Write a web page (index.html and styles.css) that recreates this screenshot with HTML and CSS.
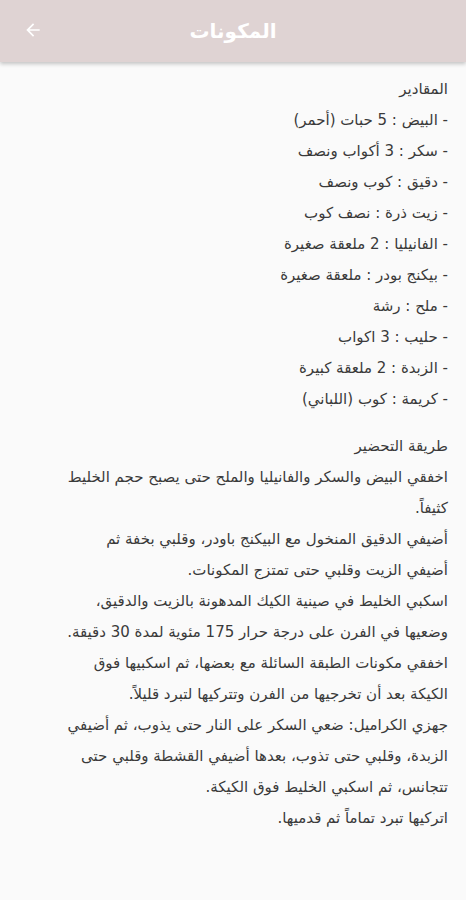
FILE: index.html
```html
<!DOCTYPE html>
<html lang="ar" dir="rtl">
<head>
<meta charset="utf-8">
<title>المكونات</title>
<link rel="stylesheet" href="styles.css">
</head>
<body>
<header class="appbar">
  <h1 class="appbar-title">المكونات</h1>
  <button class="back-btn" aria-label="رجوع">
    <svg width="20" height="20" viewBox="0 0 24 24"><path d="M20 11H7.83l5.59-5.59L12 4l-8 8 8 8 1.41-1.41L7.83 13H20v-2z" fill="#ffffff"/></svg>
  </button>
</header>
<main class="content">
  <section class="block">
    <p class="line">المقادير</p>
    <p class="line">- البيض : 5 حبات (أحمر)</p>
    <p class="line">- سكر : 3 أكواب ونصف</p>
    <p class="line">- دقيق : كوب ونصف</p>
    <p class="line">- زيت ذرة : نصف كوب</p>
    <p class="line">- الفانيليا : 2 ملعقة صغيرة</p>
    <p class="line">- بيكنج بودر : ملعقة صغيرة</p>
    <p class="line">- ملح : رشة</p>
    <p class="line">- حليب : 3 اكواب</p>
    <p class="line">- الزبدة : 2 ملعقة كبيرة</p>
    <p class="line">- كريمة : كوب (اللباني)</p>
  </section>
  <section class="block">
    <p class="line">طريقة التحضير</p>
    <p class="line">اخفقي البيض والسكر والفانيليا والملح حتى يصبح حجم الخليط<br>كثيفاً.</p>
    <p class="line">أضيفي الدقيق المنخول مع البيكنج باودر، وقلبي بخفة ثم<br>أضيفي الزيت وقلبي حتى تمتزج المكونات.</p>
    <p class="line">اسكبي الخليط في صينية الكيك المدهونة بالزيت والدقيق،<br>وضعيها في الفرن على درجة حرار 175 مئوية لمدة 30 دقيقة.</p>
    <p class="line">اخفقي مكونات الطبقة السائلة مع بعضها، ثم اسكبيها فوق<br>الكيكة بعد أن تخرجيها من الفرن وتتركيها لتبرد قليلاً.</p>
    <p class="line">جهزي الكراميل: ضعي السكر على النار حتى يذوب، ثم أضيفي<br>الزبدة، وقلبي حتى تذوب، بعدها أضيفي القشطة وقلبي حتى<br>تتجانس، ثم اسكبي الخليط فوق الكيكة.</p>
    <p class="line">اتركيها تبرد تماماً ثم قدميها.</p>
  </section>
</main>
</body>
</html>
```

FILE: styles.css
```css
* { box-sizing: border-box; }
html, body {
  margin: 0;
  padding: 0;
  background: #fafafa;
}
body {
  font-family: "DejaVu Sans", "Noto Sans", sans-serif;
  color: #3a3a3a;
  width: 466px;
  height: 900px;
  overflow: hidden;
}
.appbar {
  position: relative;
  height: 62px;
  background: #dfd3d3;
  display: flex;
  align-items: center;
  justify-content: center;
  box-shadow: 0 2px 4px rgba(0,0,0,0.22);
}
.appbar-title {
  margin: 0;
  color: #ffffff;
  font-size: 20px;
  font-weight: bold;
}
.back-btn {
  position: absolute;
  left: 22px;
  top: 19px;
  width: 22px;
  height: 22px;
  padding: 0;
  border: 0;
  background: transparent;
  display: flex;
  align-items: center;
  justify-content: center;
}
.content {
  padding: 12px 18px 0 18px;
}
.block {
  margin: 0 0 16px 0;
}
.line {
  margin: 0;
  font-size: 15px;
  line-height: 31px;
  white-space: nowrap;
}
```
